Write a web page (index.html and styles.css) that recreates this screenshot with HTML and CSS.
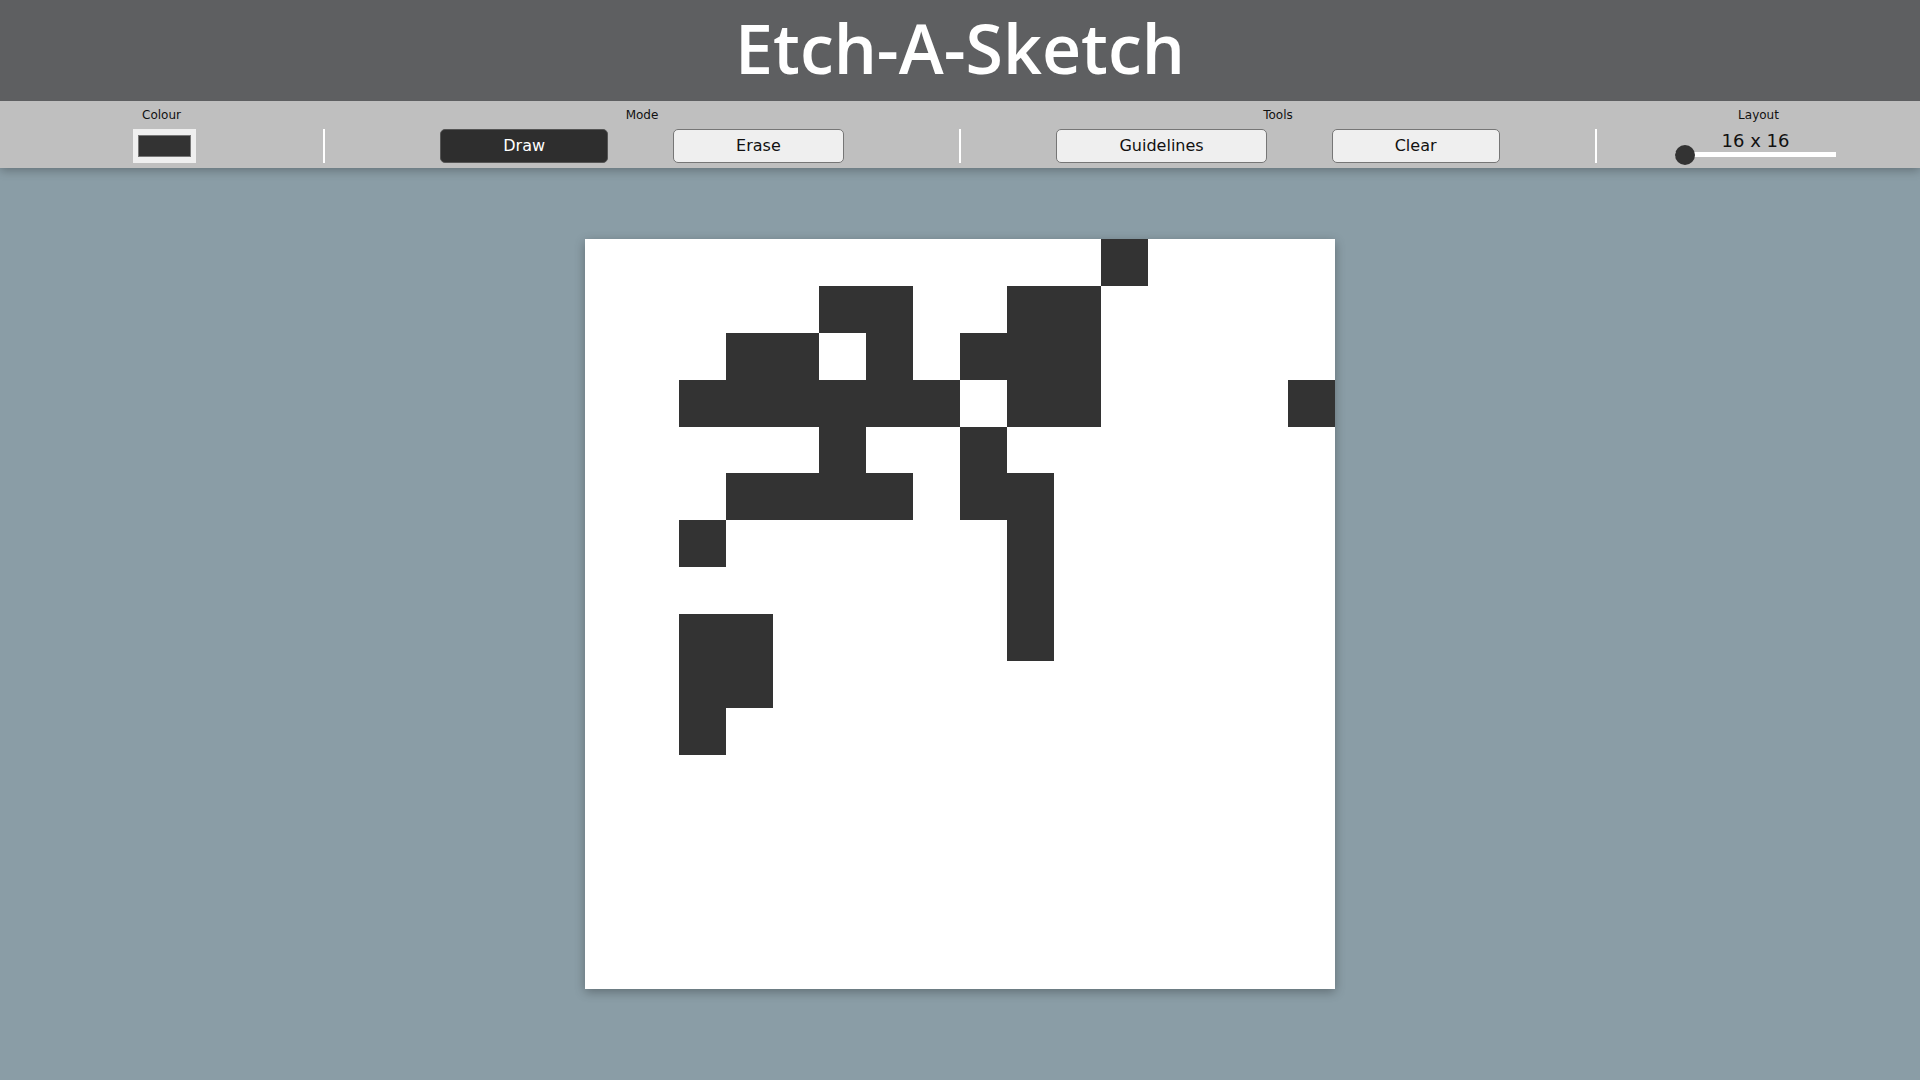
FILE: index.html
```html
<!DOCTYPE html>
<html lang="en">
<head>
<meta charset="utf-8">
<title>Etch-A-Sketch</title>
<link rel="stylesheet" href="styles.css">
</head>
<body>
<header class="header">
  <h1 class="title">Etch-A-Sketch</h1>
</header>
<nav class="toolbar">
  <section class="group group--side">
    <div class="group-label">Colour</div>
    <div class="group-controls">
      <div class="swatch"><span class="swatch-fill"></span></div>
    </div>
  </section>
  <div class="divider"></div>
  <section class="group group--main">
    <div class="group-label">Mode</div>
    <div class="group-controls">
      <button class="btn btn--active">Draw</button>
      <button class="btn">Erase</button>
    </div>
  </section>
  <div class="divider"></div>
  <section class="group group--main">
    <div class="group-label">Tools</div>
    <div class="group-controls">
      <button class="btn">Guidelines</button>
      <button class="btn">Clear</button>
    </div>
  </section>
  <div class="divider"></div>
  <section class="group group--side">
    <div class="group-label">Layout</div>
    <div class="group-controls">
      <div class="layout">
        <div class="layout-value">16 x 16</div>
        <div class="slider"><span class="slider-thumb"></span></div>
      </div>
    </div>
  </section>
</nav>
<main class="stage">
  <div class="board">
    <div class="cell"></div><div class="cell"></div><div class="cell"></div><div class="cell"></div><div class="cell"></div><div class="cell"></div><div class="cell"></div><div class="cell"></div><div class="cell"></div><div class="cell"></div><div class="cell"></div><div class="cell on"></div><div class="cell"></div><div class="cell"></div><div class="cell"></div><div class="cell"></div>
    <div class="cell"></div><div class="cell"></div><div class="cell"></div><div class="cell"></div><div class="cell"></div><div class="cell on"></div><div class="cell on"></div><div class="cell"></div><div class="cell"></div><div class="cell on"></div><div class="cell on"></div><div class="cell"></div><div class="cell"></div><div class="cell"></div><div class="cell"></div><div class="cell"></div>
    <div class="cell"></div><div class="cell"></div><div class="cell"></div><div class="cell on"></div><div class="cell on"></div><div class="cell"></div><div class="cell on"></div><div class="cell"></div><div class="cell on"></div><div class="cell on"></div><div class="cell on"></div><div class="cell"></div><div class="cell"></div><div class="cell"></div><div class="cell"></div><div class="cell"></div>
    <div class="cell"></div><div class="cell"></div><div class="cell on"></div><div class="cell on"></div><div class="cell on"></div><div class="cell on"></div><div class="cell on"></div><div class="cell on"></div><div class="cell"></div><div class="cell on"></div><div class="cell on"></div><div class="cell"></div><div class="cell"></div><div class="cell"></div><div class="cell"></div><div class="cell on"></div>
    <div class="cell"></div><div class="cell"></div><div class="cell"></div><div class="cell"></div><div class="cell"></div><div class="cell on"></div><div class="cell"></div><div class="cell"></div><div class="cell on"></div><div class="cell"></div><div class="cell"></div><div class="cell"></div><div class="cell"></div><div class="cell"></div><div class="cell"></div><div class="cell"></div>
    <div class="cell"></div><div class="cell"></div><div class="cell"></div><div class="cell on"></div><div class="cell on"></div><div class="cell on"></div><div class="cell on"></div><div class="cell"></div><div class="cell on"></div><div class="cell on"></div><div class="cell"></div><div class="cell"></div><div class="cell"></div><div class="cell"></div><div class="cell"></div><div class="cell"></div>
    <div class="cell"></div><div class="cell"></div><div class="cell on"></div><div class="cell"></div><div class="cell"></div><div class="cell"></div><div class="cell"></div><div class="cell"></div><div class="cell"></div><div class="cell on"></div><div class="cell"></div><div class="cell"></div><div class="cell"></div><div class="cell"></div><div class="cell"></div><div class="cell"></div>
    <div class="cell"></div><div class="cell"></div><div class="cell"></div><div class="cell"></div><div class="cell"></div><div class="cell"></div><div class="cell"></div><div class="cell"></div><div class="cell"></div><div class="cell on"></div><div class="cell"></div><div class="cell"></div><div class="cell"></div><div class="cell"></div><div class="cell"></div><div class="cell"></div>
    <div class="cell"></div><div class="cell"></div><div class="cell on"></div><div class="cell on"></div><div class="cell"></div><div class="cell"></div><div class="cell"></div><div class="cell"></div><div class="cell"></div><div class="cell on"></div><div class="cell"></div><div class="cell"></div><div class="cell"></div><div class="cell"></div><div class="cell"></div><div class="cell"></div>
    <div class="cell"></div><div class="cell"></div><div class="cell on"></div><div class="cell on"></div><div class="cell"></div><div class="cell"></div><div class="cell"></div><div class="cell"></div><div class="cell"></div><div class="cell"></div><div class="cell"></div><div class="cell"></div><div class="cell"></div><div class="cell"></div><div class="cell"></div><div class="cell"></div>
    <div class="cell"></div><div class="cell"></div><div class="cell on"></div><div class="cell"></div><div class="cell"></div><div class="cell"></div><div class="cell"></div><div class="cell"></div><div class="cell"></div><div class="cell"></div><div class="cell"></div><div class="cell"></div><div class="cell"></div><div class="cell"></div><div class="cell"></div><div class="cell"></div>
    <div class="cell"></div><div class="cell"></div><div class="cell"></div><div class="cell"></div><div class="cell"></div><div class="cell"></div><div class="cell"></div><div class="cell"></div><div class="cell"></div><div class="cell"></div><div class="cell"></div><div class="cell"></div><div class="cell"></div><div class="cell"></div><div class="cell"></div><div class="cell"></div>
    <div class="cell"></div><div class="cell"></div><div class="cell"></div><div class="cell"></div><div class="cell"></div><div class="cell"></div><div class="cell"></div><div class="cell"></div><div class="cell"></div><div class="cell"></div><div class="cell"></div><div class="cell"></div><div class="cell"></div><div class="cell"></div><div class="cell"></div><div class="cell"></div>
    <div class="cell"></div><div class="cell"></div><div class="cell"></div><div class="cell"></div><div class="cell"></div><div class="cell"></div><div class="cell"></div><div class="cell"></div><div class="cell"></div><div class="cell"></div><div class="cell"></div><div class="cell"></div><div class="cell"></div><div class="cell"></div><div class="cell"></div><div class="cell"></div>
    <div class="cell"></div><div class="cell"></div><div class="cell"></div><div class="cell"></div><div class="cell"></div><div class="cell"></div><div class="cell"></div><div class="cell"></div><div class="cell"></div><div class="cell"></div><div class="cell"></div><div class="cell"></div><div class="cell"></div><div class="cell"></div><div class="cell"></div><div class="cell"></div>
    <div class="cell"></div><div class="cell"></div><div class="cell"></div><div class="cell"></div><div class="cell"></div><div class="cell"></div><div class="cell"></div><div class="cell"></div><div class="cell"></div><div class="cell"></div><div class="cell"></div><div class="cell"></div><div class="cell"></div><div class="cell"></div><div class="cell"></div><div class="cell"></div>
  </div>
</main>
</body>
</html>
```

FILE: styles.css
```css
* { box-sizing: border-box; }

html, body {
  margin: 0;
  padding: 0;
}

body {
  min-height: 1080px;
  background: #8a9da6;
  font-family: "DejaVu Sans", "Liberation Sans", sans-serif;
  color: #111;
}

.header {
  position: relative;
  z-index: 2;
  height: 101px;
  padding-top: 14px;
  background: #5e5f61;
  text-align: center;
}

.title {
  margin: 0;
  font-family: "Open Sans", "DejaVu Sans", sans-serif;
  font-weight: 600;
  font-size: 68px;
  line-height: 68px;
  color: #ffffff;
}

.toolbar {
  position: relative;
  z-index: 1;
  display: flex;
  height: 67px;
  padding: 7px 0 5px;
  background: #bfbfbf;
  box-shadow: 0 2px 10px rgba(0, 0, 0, 0.3);
}

.group {
  display: flex;
  flex-direction: column;
  align-items: center;
}

.group--side { flex: 0 0 323px; }
.group--main { flex: 1 1 0; }

.group-label {
  font-size: 12px;
  line-height: 15px;
  color: #111;
  margin-bottom: 6px;
}

.group-controls {
  display: flex;
  gap: 65px;
  height: 34px;
}

.divider {
  flex: 0 0 2px;
  align-self: flex-end;
  height: 34px;
  background: #ffffff;
}

.swatch {
  width: 63px;
  height: 34px;
  padding: 6px 5px;
  background: #efefef;
  margin-left: 6px;
}

.swatch-fill {
  display: block;
  width: 100%;
  height: 100%;
  background: #333333;
  border: 1px solid #777777;
}

.btn {
  height: 34px;
  padding: 0 62px 2px;
  border: 1px solid #767676;
  border-radius: 5px;
  background: #efefef;
  color: #111;
  font-family: "DejaVu Sans", sans-serif;
  font-size: 16px;
}

.btn--active {
  background: #2e2e2e;
  border-color: #555555;
  color: #ffffff;
}

.layout {
  display: flex;
  flex-direction: column;
  align-items: center;
  width: 161px;
  margin-left: -6px;
}

.layout-value {
  padding-top: 2px;
  font-size: 18px;
  line-height: 20px;
  color: #111;
}

.slider {
  position: relative;
  width: 161px;
  height: 5px;
  margin-top: 1px;
  background: #ffffff;
}

.slider-thumb {
  position: absolute;
  left: 0;
  top: -7.5px;
  width: 20px;
  height: 20px;
  border-radius: 50%;
  background: #333333;
}

.stage {
  display: flex;
  justify-content: center;
  padding-top: 71px;
}

.board {
  display: grid;
  grid-template-columns: repeat(16, 1fr);
  grid-template-rows: repeat(16, 1fr);
  width: 750px;
  height: 750px;
  background: #ffffff;
  box-shadow: 0 3px 10px rgba(0, 0, 0, 0.3);
}

.cell { background: #ffffff; }
.cell.on { background: #333333; }
```
